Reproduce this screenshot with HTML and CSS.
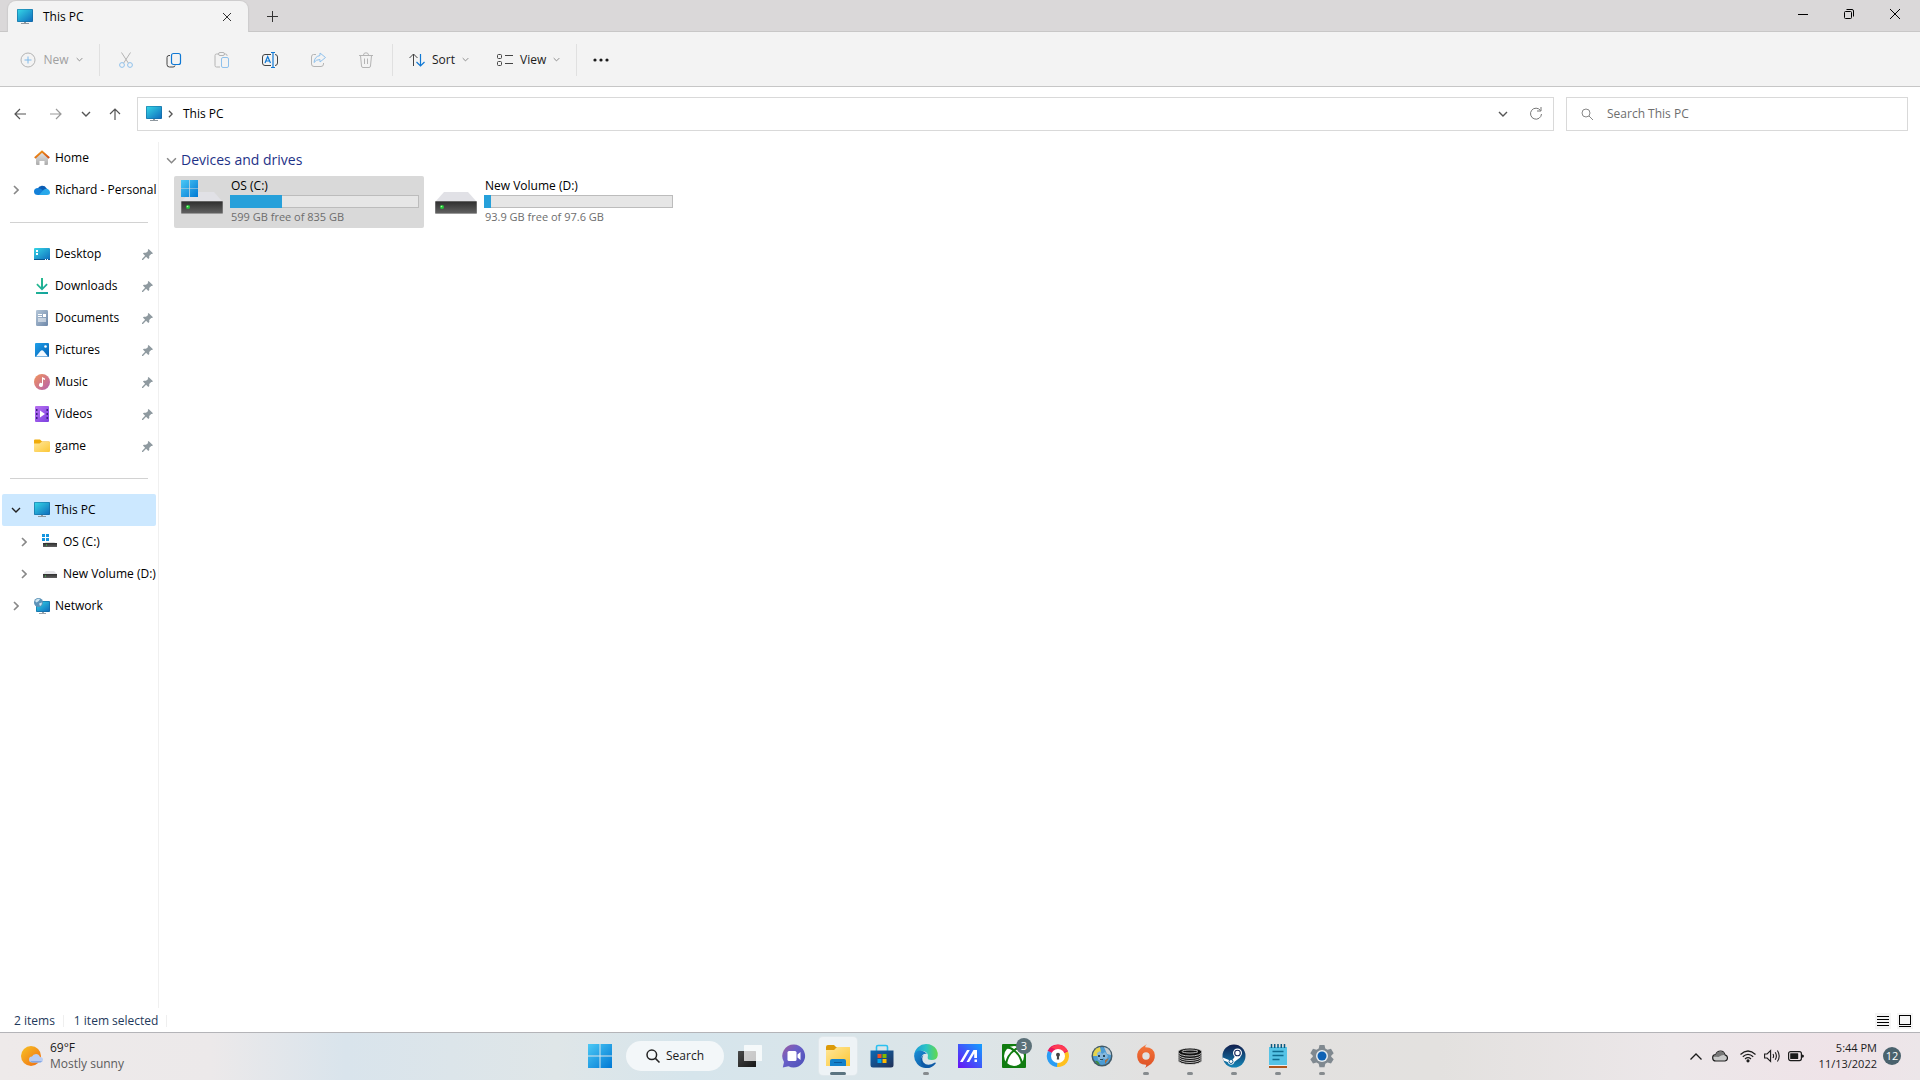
FILE: index.html
```html
<!DOCTYPE html>
<html lang="en">
<head>
<meta charset="utf-8">
<title>This PC</title>
<link rel="stylesheet" href="styles.css">
</head>
<body>
<svg class="defs" aria-hidden="true">
  <defs>
    <linearGradient id="g-screen" x1="0" y1="0" x2="1" y2="1"><stop offset="0" stop-color="#35d6e6"/><stop offset="1" stop-color="#0f6cbd"/></linearGradient>
    <linearGradient id="g-body" x1="0" y1="0" x2="0" y2="1"><stop offset="0" stop-color="#2e2e2e"/><stop offset="1" stop-color="#606060"/></linearGradient>
    <linearGradient id="g-win" x1="0" y1="0" x2="1" y2="1"><stop offset="0" stop-color="#4cc9f5"/><stop offset="1" stop-color="#0078d4"/></linearGradient>
    <linearGradient id="g-folder" x1="0" y1="0" x2="1" y2="1"><stop offset="0" stop-color="#ffe79a"/><stop offset="1" stop-color="#fcc736"/></linearGradient>
    <linearGradient id="g-green" x1="0" y1="0" x2="1" y2="1"><stop offset="0" stop-color="#2fc28a"/><stop offset="1" stop-color="#10a0a0"/></linearGradient>
    <linearGradient id="g-doc" x1="0" y1="0" x2="1" y2="1"><stop offset="0" stop-color="#b4c6d8"/><stop offset="1" stop-color="#6d87a8"/></linearGradient>
    <linearGradient id="g-pic" x1="0" y1="0" x2="1" y2="1"><stop offset="0" stop-color="#1ea0ea"/><stop offset="1" stop-color="#0560b4"/></linearGradient>
    <linearGradient id="g-music" x1="0" y1="0" x2="1" y2="1"><stop offset="0" stop-color="#f2945a"/><stop offset="1" stop-color="#b45fb0"/></linearGradient>
    <linearGradient id="g-video" x1="0" y1="0" x2="1" y2="1"><stop offset="0" stop-color="#b871f0"/><stop offset="1" stop-color="#7b3fe0"/></linearGradient>
    <linearGradient id="g-house" x1="0" y1="0" x2="0" y2="1"><stop offset="0" stop-color="#e6e6e6"/><stop offset="1" stop-color="#ababab"/></linearGradient>
    <linearGradient id="g-roof" x1="0" y1="0" x2="1" y2="1"><stop offset="0" stop-color="#f5a01c"/><stop offset="1" stop-color="#cf4a12"/></linearGradient>
    <linearGradient id="g-sun" x1="0" y1="0" x2="1" y2="1"><stop offset="0" stop-color="#f7c326"/><stop offset="1" stop-color="#f06a10"/></linearGradient>
    <linearGradient id="g-chat" x1="0" y1="0" x2="1" y2="1"><stop offset="0" stop-color="#a05a9e"/><stop offset="0.4" stop-color="#6a60c8"/><stop offset="1" stop-color="#4a50b8"/></linearGradient>
    <linearGradient id="g-store" x1="0" y1="0" x2="1" y2="1"><stop offset="0" stop-color="#0c6ab6"/><stop offset="1" stop-color="#223056"/></linearGradient>
    <linearGradient id="g-edge" x1="0" y1="0" x2="1" y2="0"><stop offset="0" stop-color="#1c9ad8"/><stop offset="0.5" stop-color="#2bc3c6"/><stop offset="1" stop-color="#63d94a"/></linearGradient>
    <linearGradient id="g-edge-low" x1="0" y1="0" x2="1" y2="1"><stop offset="0" stop-color="#1a8fd8"/><stop offset="1" stop-color="#0c4a94"/></linearGradient>
    <linearGradient id="g-asus" x1="0" y1="1" x2="1" y2="0"><stop offset="0" stop-color="#6a10f5"/><stop offset="1" stop-color="#12a0ff"/></linearGradient>
    <linearGradient id="g-steam" x1="0" y1="0" x2="0" y2="1"><stop offset="0" stop-color="#111d4c"/><stop offset="1" stop-color="#1486b8"/></linearGradient>
    <linearGradient id="g-origin" x1="0" y1="0" x2="0" y2="1"><stop offset="0" stop-color="#f5783c"/><stop offset="1" stop-color="#dd4f24"/></linearGradient>
    <linearGradient id="g-view" x1="0" y1="0" x2="1" y2="1"><stop offset="0" stop-color="#4a4a4a"/><stop offset="1" stop-color="#161616"/></linearGradient>
    <symbol id="pc" viewBox="0 0 16 16"><path d="M7 12h2v2h3v1H4v-1h3z" fill="#8f989f"/><rect width="16" height="13" rx="1" fill="#14689e"/><rect x="0.6" y="0.6" width="14.8" height="11.8" rx="0.5" fill="url(#g-screen)"/></symbol>
    <symbol id="chev-down" viewBox="0 0 10 6"><path d="M1 1l4 4 4-4" fill="none" stroke="currentColor" stroke-width="1.4"/></symbol>
    <symbol id="chev-right" viewBox="0 0 6 10"><path d="M1 1l4 4-4 4" fill="none" stroke="currentColor" stroke-width="1.6"/></symbol>
    <symbol id="pin" viewBox="0 0 12 12"><path d="M6.6 1L11 5.2l-1 .9-.8-.1-2 2.100.1 2-1 .9-2.200-2.300L1 12H0v-1l3.100-3.200L.9 5.600l1-.9 2.100.1L6.200 2.900 5.700 1.900z" fill="#8f9aa0"/></symbol>
    <symbol id="drive" viewBox="0 0 42 22"><path d="M9 0h24l8 9H1z" fill="#e1e1e6"/><rect y="9" width="42" height="13" rx="1" fill="#999"/><rect x="0.5" y="9.500" width="41" height="11.500" fill="url(#g-body)"/><circle cx="7" cy="15" r="2" fill="#24c838"/><circle cx="6.500" cy="14.500" r="0.8" fill="#a6ffa0"/></symbol>
    <symbol id="win" viewBox="0 0 24 24"><path d="M0 0h11.500v11.500H0zM12.500 0H24v11.500H12.500zM0 12.500h11.500V24H0zM12.500 12.500H24V24H12.500z" fill="url(#g-win)"/></symbol>
  </defs>
</svg>

<div class="window">
  <header class="tabs">
    <div class="tab">
      <svg class="i16"><use href="#pc"/></svg>
      <span class="tab-title">This PC</span>
      <button class="tab-close" aria-label="Close tab"><svg width="10" height="10" viewBox="0 0 10 10"><path d="M1 1l8 8M9 1L1 9" stroke="#333"/></svg></button>
    </div>
    <button class="tab-new" aria-label="New tab"><svg width="11" height="11" viewBox="0 0 11 11"><path d="M5.500 0v11M0 5.500h11" stroke="#333"/></svg></button>
    <div class="caption">
      <button aria-label="Minimize"><svg width="10" height="10" viewBox="0 0 10 10"><path d="M0 5.500h10" stroke="#000"/></svg></button>
      <button aria-label="Restore"><svg width="10" height="10" viewBox="0 0 10 10" fill="none" stroke="#000"><rect x="0.5" y="2.500" width="7" height="7" rx="1"/><path d="M2.500.5H8Q9.500.5 9.500 2v5.500"/></svg></button>
      <button aria-label="Close"><svg width="10" height="10" viewBox="0 0 10 10"><path d="M0 0l10 10M10 0L0 10" stroke="#000"/></svg></button>
    </div>
  </header>

  <div class="toolbar">
    <button class="cmd new" disabled>
      <svg class="i16" viewBox="0 0 16 16" fill="none"><circle cx="8" cy="8" r="7" stroke="#b4b4b4"/><path d="M8 4.500v7M4.500 8h7" stroke="#7fb9ea"/></svg>
      New <svg class="drop"><use href="#chev-down"/></svg>
    </button>
    <div class="tools">
      <button class="tool" aria-label="Cut" disabled><svg class="i16" viewBox="0 0 16 16" fill="none"><path d="M3.500 0.5l6.800 10.500M12.500.5L5.700 11" stroke="#b4b4b4"/><circle cx="4" cy="13" r="2.400" stroke="#8fc1ec"/><circle cx="12" cy="13" r="2.400" stroke="#8fc1ec"/></svg></button>
      <button class="tool" aria-label="Copy"><svg class="i16" viewBox="0 0 16 16" fill="none"><path d="M4 3.500H3Q1 3.500 1 5.500v7Q1 15 3.500 15H7q2 0 2-1.500" stroke="#444"/><rect x="5.500" y="1.500" width="9" height="11" rx="2" stroke="#0f78d4" stroke-width="1.200"/></svg></button>
      <button class="tool" aria-label="Paste" disabled><svg class="i16" viewBox="0 0 16 16" fill="none"><path d="M4.500 2H2.500q-1.500 0-1.500 1.500v10Q1 15 2.500 15H6M10.500 2h1Q13 2 13 3.500V4" stroke="#b4b4b4"/><rect x="4.500" y="0.5" width="6" height="3" rx="1.500" stroke="#b4b4b4"/><rect x="7.500" y="5.500" width="7" height="10" rx="1.500" stroke="#8fc1ec"/></svg></button>
      <button class="tool" aria-label="Rename"><svg class="i16" viewBox="0 0 16 16" fill="none"><path d="M9 2.500H3Q.5 2.500.5 5v6q0 2.500 2.500 2.500h6M13 2.500q2.500 0 2.500 2.500v6q0 2.500-2.500 2.500" stroke="#444"/><path d="M3 11l2.700-6.500L8.500 11M4 9h3.500M9 .5h4M9 15.500h4M11 .5v15" stroke="#0f78d4" stroke-width="1.200"/></svg></button>
      <button class="tool" aria-label="Share" disabled><svg class="i16" viewBox="0 0 16 16" fill="none"><path d="M6 2.500H3.500Q1.500 2.500 1.500 5v7q0 2.500 2.500 2.500h7q2.500 0 2.500-2.500v-1" stroke="#b4b4b4"/><path d="M10 1L15.500 5.500 10 10V7.500Q6 7.500 4 10.500q.5-6 6-7z" stroke="#8fc1ec" stroke-linejoin="round"/></svg></button>
      <button class="tool" aria-label="Delete" disabled><svg class="i16" viewBox="0 0 16 16" fill="none" stroke="#b4b4b4"><path d="M1 3.500h14M5.500 3Q5.500.8 8 .8T10.500 3M2.500 3.500l1 10.500q.1 1.500 1.500 1.500h6q1.400 0 1.500-1.500l1-10.500M6.500 6.500v5.500M9.500 6.500v5.500"/></svg></button>
    </div>
    <div class="group">
      <button class="cmd">
        <svg class="i16" viewBox="0 0 16 16" fill="none"><path d="M4.500 14V2M.5 6l4-4 4 4" stroke="#444"/><path d="M11.500 2v12M7.500 10l4 4 4-4" stroke="#0f78d4" stroke-width="1.200"/></svg>
        Sort <svg class="drop"><use href="#chev-down"/></svg>
      </button>
      <button class="cmd">
        <svg class="i16" viewBox="0 0 16 16" fill="none" stroke="#444"><rect x="0.500" y="2.500" width="4" height="4" rx="1"/><rect x="0.500" y="9.500" width="4" height="4" rx="1"/><path d="M8 3.500h8M8 11.500h8"/></svg>
        View <svg class="drop"><use href="#chev-down"/></svg>
      </button>
    </div>
    <button class="more" aria-label="See more"><svg class="i16" viewBox="0 0 16 16" fill="#1b1b1b"><circle cx="2" cy="8" r="1.600"/><circle cx="8" cy="8" r="1.600"/><circle cx="14" cy="8" r="1.600"/></svg></button>
  </div>

  <div class="location">
    <div class="history">
      <button aria-label="Back"><svg width="12" height="12" viewBox="0 0 12 12" fill="none" stroke="#555" stroke-width="1.200"><path d="M12 6H1M6 1L1 6l5 5"/></svg></button>
      <button aria-label="Forward"><svg width="12" height="12" viewBox="0 0 12 12" fill="none" stroke="#999" stroke-width="1.200"><path d="M0 6h11M6 1l5 5-5 5"/></svg></button>
      <button class="recent" aria-label="Recent locations"><svg class="chev"><use href="#chev-down"/></svg></button>
      <button class="up" aria-label="Up"><svg width="12" height="12" viewBox="0 0 12 12" fill="none" stroke="#555" stroke-width="1.200"><path d="M6 12V1M1 6l5-5 5 5"/></svg></button>
    </div>
    <div class="address">
      <svg class="i16"><use href="#pc"/></svg>
      <svg class="crumb"><use href="#chev-right"/></svg>
      <span class="path">This PC</span>
      <button aria-label="Previous locations"><svg class="chev"><use href="#chev-down"/></svg></button>
      <button aria-label="Refresh"><svg width="14" height="14" viewBox="0 0 14 14" fill="none" stroke="#777"><path d="M11.500 3.500A5.500 5.500 0 1 0 12.500 7M12 0v4H8"/></svg></button>
    </div>
    <label class="search">
      <svg width="12" height="12" viewBox="0 0 12 12" fill="none" stroke="#888"><circle cx="5" cy="5" r="4"/><path d="M8 8l4 4"/></svg>
      <input type="search" placeholder="Search This PC" aria-label="Search This PC">
    </label>
  </div>

  <div class="content">
    <nav class="side">
      <a href="#home"><span></span><svg class="i16" viewBox="0 0 16 16"><path d="M2 7.500L8 2l6 5.500V14q0 1-1 1h-2.500v-4h-5v4H3q-1 0-1-1z" fill="url(#g-house)"/><path d="M.8 8L8 1.500 15.200 8" fill="none" stroke="url(#g-roof)" stroke-width="2"/></svg>Home</a>
      <a href="#onedrive"><svg class="exp"><use href="#chev-right"/></svg><svg class="i16" viewBox="0 0 16 16"><path d="M3.500 7A5 4.800 0 0 1 12.500 6.200L14 9H3z" fill="#0a5cb4"/><path d="M0 9.500Q0 6 4 6q3 0 5 2.500L12 13H4Q0 13 0 9.500z" fill="#1480d8"/><path d="M5 13l4.500-5q3-2.500 5.500 0 1 1 1 2.500 0 2.500-3 2.500z" fill="#28a8ea"/></svg>Richard - Personal</a>
      <hr>
      <a href="#desktop"><span></span><svg class="i16" viewBox="0 0 16 16"><rect y="2" width="16" height="12" rx="1" fill="url(#g-screen)"/><path d="M2 4h2v2H2zM2 7h2v2H2z" fill="#fff"/><path d="M0 13h16v1H0z" fill="#075590"/><path d="M11 13h1v1h-1zM13 13h1v1h-1z" fill="#fff"/></svg>Desktop<svg class="pin"><use href="#pin"/></svg></a>
      <a href="#downloads"><span></span><svg class="i16" viewBox="0 0 16 16"><path d="M7 0h2v9l3.500-3.500 1.200 1.300L8 12.500 2.300 6.800l1.200-1.300L7 9zM2 14h12v2H2z" fill="url(#g-green)"/></svg>Downloads<svg class="pin"><use href="#pin"/></svg></a>
      <a href="#documents"><span></span><svg class="i16" viewBox="0 0 16 16"><rect x="2" width="12" height="16" rx="1.200" fill="url(#g-doc)"/><path d="M4 4h4v1H4zM4 6h4v1H4zM9 4h3v3H9zM4 8.500h8v1H4zM4 10.500h8v1H4z" fill="#fff"/></svg>Documents<svg class="pin"><use href="#pin"/></svg></a>
      <a href="#pictures"><span></span><svg class="i16" viewBox="0 0 16 16"><rect x="1" y="1" width="14" height="14" rx="1" fill="url(#g-pic)"/><path d="M2 14.500L6.500 9q1.500-1.500 3 0l4.500 5.500z" fill="#f4faff"/><circle cx="11.500" cy="4.500" r="1.300" fill="#fff"/></svg>Pictures<svg class="pin"><use href="#pin"/></svg></a>
      <a href="#music"><span></span><svg class="i16" viewBox="0 0 16 16"><circle cx="8" cy="8" r="8" fill="url(#g-music)"/><path d="M8 3l3 1.500V6L9 5.200V11a2 2 0 1 1-1-1.800z" fill="#fff"/></svg>Music<svg class="pin"><use href="#pin"/></svg></a>
      <a href="#videos"><span></span><svg class="i16" viewBox="0 0 16 16"><rect x="1" width="14" height="16" rx="1" fill="url(#g-video)"/><path d="M2 3h1.500v2H2zM2 7h1.500v2H2zM2 11h1.500v2H2zM12.500 3H14v2h-1.500zM12.500 7H14v2h-1.500zM12.500 11H14v2h-1.500z" fill="#3a1f80"/><path d="M6 4.500l5 3.500-5 3.500z" fill="#fff"/></svg>Videos<svg class="pin"><use href="#pin"/></svg></a>
      <a href="#game"><span></span><svg class="i16" viewBox="0 0 16 16"><path d="M0 2.500Q0 1.500 1 1.500h5L8 3.500h7q1 0 1 1V7H0z" fill="#f0ac0a"/><path d="M0 5.500h5.500L7.500 4H15.500q.5 0 .5.500V13q0 1-1 1H1q-1 0-1-1z" fill="url(#g-folder)"/></svg>game<svg class="pin"><use href="#pin"/></svg></a>
      <hr>
      <a href="#this-pc" class="current" aria-current="page"><svg class="exp open"><use href="#chev-down"/></svg><svg class="i16"><use href="#pc"/></svg>This PC</a>
      <a href="#c" class="child"><svg class="exp"><use href="#chev-right"/></svg><svg class="i16" viewBox="0 0 16 16"><path d="M4 8h8l3 2H1z" fill="#ddd"/><rect x="1" y="9" width="14" height="4" fill="url(#g-body)"/><path d="M4 10.500h1v1H4z" fill="#3be04a"/><path d="M0 0h7v7.500H0z" fill="#fff"/><path d="M0 0h3v3H0zM4 0h3v3H4zM0 4h3v3H0zM4 4h3v3H4z" fill="#1495e0"/></svg>OS (C:)</a>
      <a href="#d" class="child"><svg class="exp"><use href="#chev-right"/></svg><svg class="i16" viewBox="0 0 16 16"><path d="M4 5h8l3 3H1z" fill="#e4e4e8"/><rect x="1" y="8" width="14" height="4" fill="url(#g-body)"/><path d="M3 9.500h1v1H3z" fill="#3be04a"/></svg>New Volume (D:)</a>
      <a href="#network"><svg class="exp"><use href="#chev-right"/></svg><svg class="i16" viewBox="0 0 16 16"><path d="M8 13h2v2h2v1H5v-1h3z" fill="#9aa3ab"/><rect x="2" y="3" width="14" height="11" rx="1" fill="#14689e"/><rect x="2.600" y="3.600" width="12.800" height="9.800" fill="url(#g-screen)"/><circle cx="4.500" cy="4.500" r="4.500" fill="#5d93b8"/><path d="M1 3q2-3 5-2Q5 4 2.500 4.500zM5 5.500l3-1q0 2.500-2 3.500z" fill="#cfe6f2"/></svg>Network</a>
    </nav>
    <main class="files">
      <h1><svg class="fold"><use href="#chev-down"/></svg>Devices and drives</h1>
      <div class="drives">
        <a href="#c" class="drive selected">
          <svg class="drive-icon" viewBox="0 0 42 42"><use href="#drive" y="12" width="42" height="22"/><use href="#win" width="17" height="17"/></svg>
          <span class="info"><span class="name">OS (C:)</span><span class="bar"><span class="fill" style="width: 28%"></span></span><span class="free">599 GB free of 835 GB</span></span>
        </a>
        <a href="#d" class="drive">
          <svg class="drive-icon" viewBox="0 0 42 42"><use href="#drive" y="12" width="42" height="22"/></svg>
          <span class="info"><span class="name">New Volume (D:)</span><span class="bar"><span class="fill" style="width: 4%"></span></span><span class="free">93.9 GB free of 97.6 GB</span></span>
        </a>
      </div>
    </main>
  </div>

  <footer class="status">
    <span>2 items</span><span>1 item selected</span>
    <div class="modes">
      <button aria-label="Details view"><svg width="12" height="12" viewBox="0 0 12 12" stroke="#000"><path d="M0 1.500h12M0 4.500h12M0 7.500h12M0 10.500h12"/></svg></button>
      <button aria-label="Large icons view"><svg width="12" height="12" viewBox="0 0 12 12" fill="none" stroke="#000"><rect x="0.500" y="0.500" width="11" height="9"/><path d="M0 11.500h12"/></svg></button>
    </div>
  </footer>
</div>

<div class="taskbar">
  <button class="weather">
    <svg width="22" height="20" viewBox="0 0 22 20"><circle cx="10" cy="10" r="10" fill="url(#g-sun)"/><path d="M11 16.500a3 3 0 0 1 0-6q1-2.500 4-2.500t4 3q3 .3 3 2.700T19.500 16.500z" fill="#b9cdf3"/><path d="M9 15h12q-1 1.500-2 1.500h-8z" fill="#86a8e4"/></svg>
    <span class="weather-text"><span>69°F</span><span class="muted">Mostly sunny</span></span>
  </button>
  <div class="apps">
    <button class="app" aria-label="Start"><svg class="i24" viewBox="0 0 24 24"><use href="#win"/></svg></button>
    <button class="find"><svg width="14" height="14" viewBox="0 0 14 14" fill="none" stroke="#222" stroke-width="1.500"><circle cx="5.800" cy="5.800" r="4.800"/><path d="M9.400 9.400L13.500 13.500"/></svg>Search</button>
    <button class="app" aria-label="Task view"><svg class="i24" viewBox="0 0 24 24"><rect y="7" width="18" height="16" rx="0.500" fill="url(#g-view)"/><rect x="6" y="1" width="18" height="16" rx="0.500" fill="#fff" fill-opacity="0.750"/></svg></button>
    <button class="app" aria-label="Chat"><svg class="i24" viewBox="0 0 24 24"><path d="M12 .5A11.500 11.500 0 1 1 6.500 22.300L.8 23.500 2 18A11.500 11.500 0 0 1 12 .5z" fill="url(#g-chat)"/><rect x="5.500" y="7" width="9" height="10" rx="1.500" fill="#fff"/><path d="M15.500 10.500l3-2.500v8l-3-2.500z" fill="#fff"/></svg></button>
    <button class="app active" aria-label="File Explorer"><svg class="i24" viewBox="0 0 24 24"><path d="M0 3q0-2 2-2h6l2 2h12q2 0 2 2v5H0z" fill="#dc9a08"/><path d="M0 6h8l3-3h12q1 0 1 1v18H0z" fill="url(#g-folder)"/><path d="M4 22v-5q0-2 2-2h12q2 0 2 2v5z" fill="#1382cc"/><path d="M8 18.500h8" stroke="#0a5a9c"/></svg></button>
    <button class="app" aria-label="Microsoft Store"><svg class="i24" viewBox="0 0 24 24"><path d="M6.500 7V3q0-1.500 1.500-1.500h8q1.500 0 1.500 1.500v4" fill="none" stroke="#2bc0f0" stroke-width="1.600"/><path d="M.5 6.500h23V21q0 2.500-2.500 2.500H3Q.5 23.500.5 21z" fill="url(#g-store)"/><path d="M7.500 10h4v4h-4z" fill="#f25022"/><path d="M12.500 10h4v4h-4z" fill="#7fba00"/><path d="M7.500 15h4v4h-4z" fill="#00a4ef"/><path d="M12.500 15h4v4h-4z" fill="#ffb900"/></svg></button>
    <button class="app running" aria-label="Edge"><svg class="i24" viewBox="0 0 24 24"><path d="M.2 11A12 12 0 0 1 12 0q7 0 10.500 5.500Q24 8.500 23.700 11.500q-.7 4.500-6 4.500-4.500 0-4-2.500 1-2.500-.7-4.500Q10 6 5.500 7 1.500 8 .2 11z" fill="url(#g-edge)"/><path d="M.2 11Q1.500 6 7 6.500q4 .5 6 3.500-4-1-5.500 3-1 5 4 8.500Q16 24 20 19.500 17 24 12 24A12 12 0 0 1 .2 11z" fill="url(#g-edge-low)"/><path d="M9.500 11q-2.500 3.500 0 7.500 4 4.500 11.500 0 1 0 .7 1Q17 25 11.500 23.800 6 21 7 14.500 7.500 12 9.500 11z" fill="#0e5aa6"/></svg></button>
    <button class="app" aria-label="MyASUS"><svg class="i24" viewBox="0 0 24 24"><path d="M0 0h24v24H0z" fill="url(#g-asus)"/><path d="M2 18l7-12h2.800l-7 12zM8.500 18l7-12H19v8h-2.800V9.500l-5 8.500zM16.500 15.500H19V18h-2.500z" fill="#fff"/></svg></button>
    <button class="app" aria-label="Xbox, 3 notifications"><svg class="i24" viewBox="0 0 24 24"><rect width="24" height="24" rx="1" fill="#107c10"/><circle cx="12" cy="12" r="10" fill="#fff"/><path d="M5 3.500Q8 2.800 12 6q4-3.200 7-2.500Q12-1 5 3.500zM12 9.500q6 5 6.500 10.500-6.500 4.500-13 0Q6 14.500 12 9.500z" fill="#107c10" fill-opacity="0"/><path d="M12 6.500Q5.500 11 4 20M12 6.500Q18.500 11 20 20M5 3.500q4 0 7 3 3-3 7-3" stroke="#107c10" stroke-width="2" fill="none"/></svg><span class="badge">3</span></button>
    <button class="app" aria-label="Secure Browser"><svg class="i24" viewBox="0 0 24 24"><path d="M12 12L1.500 7A11 11 0 0 1 22 8z" fill="#e8175c"/><path d="M12 12L22 7.500A11 11 0 0 1 11 23z" fill="#ffc01e"/><path d="M12 12l-1 11A11 11 0 0 1 2 7z" fill="#2a9df4"/><path d="M5 3.500A11 11 0 0 1 22 7l-5 1z" fill="#ff3b53"/><circle cx="12" cy="12" r="7" fill="#fff"/><circle cx="12" cy="10.800" r="2" fill="#444"/><path d="M11.200 11h1.600l.4 4.500h-2.400z" fill="#444"/></svg></button>
    <button class="app" aria-label="Globe"><svg class="i24" viewBox="0 0 24 24"><circle cx="12" cy="12" r="10.500" fill="#415a68"/><circle cx="12" cy="12" r="9" fill="#4c9cd4"/><path d="M3 12q0-7 7-9l1 5-3 4z" fill="#e6d34c"/><path d="M14 3q7 2 7 8l-4-1z" fill="#c4ccd0"/><path d="M7 9l3-2 2 3 3-2 3 4-2 4-3-2-2 3-3-1z" fill="#86b8dc"/><path d="M8 11h2v2H8zM13 11h2v2h-2zM10 15h3v1h-3z" fill="#294759"/><path d="M5 17q3-1 5 4-3-.5-5-4z" fill="#3f8a3c"/><path d="M15 16l4-2-4 6z" fill="#ad6d3a"/></svg></button>
    <button class="app running" aria-label="Origin"><svg class="i24" viewBox="0 0 24 24"><path fill-rule="evenodd" d="M13 0q-2 1.500-1.800 3.200Q20 3 20.800 11 21.500 18 14 22l-3 2q1.500-2 1.200-3.200Q4 21 3.200 13 2.500 6 10 2zM12 8.300a3.700 3.700 0 1 0 0 7.400 3.700 3.700 0 0 0 0-7.400z" fill="url(#g-origin)"/></svg></button>
    <button class="app running" aria-label="Disk stack"><svg class="i24" viewBox="0 0 24 24" fill="#111" stroke="#e4e4e4" stroke-width="0.800"><ellipse cx="12" cy="16" rx="12" ry="4.500"/><ellipse cx="12" cy="14" rx="12" ry="4.500"/><ellipse cx="12" cy="12" rx="12" ry="4.500"/><ellipse cx="12" cy="10" rx="12" ry="4.500"/><ellipse cx="12" cy="8" rx="12" ry="4"/><ellipse cx="12" cy="7.500" rx="8" ry="1.500"/></svg></button>
    <button class="app running" aria-label="Steam"><svg class="i24" viewBox="0 0 24 24"><circle cx="12" cy="12" r="11.500" fill="url(#g-steam)"/><path d="M.8 13.500l6.700 2.800 3-.6 3-4 5 1.500-6 4.500q-.8 3-3.500 3-2.500 0-3.400-2.700l-4-1.500z" fill="#fff"/><circle cx="15.500" cy="9" r="4.500" fill="#fff"/><circle cx="15.500" cy="9" r="2.800" fill="none" stroke="#17285c" stroke-width="1.100"/><circle cx="9" cy="17.500" r="2" fill="none" stroke="#155e90"/></svg></button>
    <button class="app running" aria-label="Notepad"><svg class="i24" viewBox="0 0 24 24"><path d="M3 3h18v18H3z" fill="#56c3e6"/><path d="M3 21h18v1H3z" fill="#eee"/><path d="M3 22h18v2H3z" fill="#b0561c"/><path d="M5.500 0v4M8.700 0v4M12 0v4M15.300 0v4M18.500 0v4" stroke="#0c5a80" stroke-width="1.500"/><path d="M6.500 7.500h11M6.500 11.500h11M6.500 15.500h7" stroke="#0f6b90" stroke-width="1.500"/></svg></button>
    <button class="app running" aria-label="Settings"><svg class="i24" viewBox="0 0 24 24"><path d="M9.500 1h5l.8 3.500 2.200 1.200L21 4.700l2.700 4.500-2.500 2.500v1l2.500 2.500L21 19.500l-3.500-1-2.200 1.200-.8 3.500h-5l-.8-3.500-2.200-1.200-3.500 1L.3 15.200l2.500-2.500v-1L.3 9.200 3 4.700l3.500 1 2.200-1.200z" fill="#808990"/><circle cx="12" cy="12" r="6" fill="#e8edf0"/><circle cx="12" cy="12" r="4.500" fill="#0f62b4"/></svg></button>
  </div>
  <div class="tray">
    <button aria-label="Show hidden icons"><svg width="12" height="7" viewBox="0 0 12 7"><path d="M0.500 6.500L6 1l5.500 5.500" fill="none" stroke="#1b1b1b" stroke-width="1.300"/></svg></button>
    <button aria-label="OneDrive"><svg class="i16" viewBox="0 0 16 16"><path d="M4 13a3.200 3.200 0 0 1-.3-6.400Q5 3 8.500 3t4.500 3.800Q15.500 7.500 15.500 10T13 13z" fill="#c8c8c8" stroke="#222" stroke-width="1.200"/><path d="M4 6.600Q5 3.600 8.500 3.600t4 3.200Q9 7 6.500 9 4 8.500 2 9 2 7 4 6.600z" fill="#777"/></svg></button>
    <button class="net" aria-label="Network, volume and battery">
      <svg class="i16" viewBox="0 0 16 16" fill="none" stroke="#1b1b1b" stroke-width="1.200"><path d="M.5 6.500q7.500-7 15 0M2.800 8.800q5.200-5 10.400 0M5 11q3-2.600 6 0"/><circle cx="8" cy="12.800" r="1" fill="#1b1b1b"/></svg>
      <svg class="i16" viewBox="0 0 16 16" fill="none" stroke="#1b1b1b" stroke-width="1.100"><path d="M.6 6h2.500l3.500-3.500v11L3.100 10H.6zM9 6q1.200 2 0 4M11.200 4.200q2.400 3.800 0 7.600M13.400 2.500q3.600 5.500 0 11"/></svg>
      <svg class="i16" viewBox="0 0 16 16"><rect x="0.600" y="3.600" width="12.800" height="9" rx="2" fill="none" stroke="#1b1b1b" stroke-width="1.200"/><rect x="2.200" y="5.200" width="8" height="5.800" rx="0.500" fill="#1b1b1b"/><path d="M14 6.500q2 0 2 1.600t-2 1.600z" fill="#1b1b1b"/></svg>
    </button>
    <button class="clock"><span>5:44 PM</span><span>11/13/2022</span></button>
    <button class="count" aria-label="12 notifications">12</button>
  </div>
</div>
</body>
</html>
```
FILE: styles.css
```css
* { box-sizing: border-box; }

body {
  margin: 0;
  min-height: 100vh;
  display: flex;
  flex-direction: column;
  background: #fff;
  color: #000;
  font: 12px/16px "Open Sans", "Noto Sans", sans-serif;
}

button {
  display: flex;
  align-items: center;
  justify-content: center;
  padding: 0;
  border: 0;
  background: none;
  color: inherit;
  font: inherit;
  white-space: nowrap;
}

a { color: inherit; text-decoration: none; }
svg { flex: none; display: block; }

.defs { position: absolute; width: 0; height: 0; }
.i16 { width: 16px; height: 16px; }
.i24 { width: 24px; height: 24px; }

.window {
  flex: 1;
  display: flex;
  flex-direction: column;
}

/* Tab strip */
.tabs {
  display: flex;
  height: 32px;
  padding-left: 8px;
  background: #dad8d9;
  box-shadow: inset 0 -1px #c8c7c7;
}
.tab {
  display: flex;
  align-items: center;
  gap: 10px;
  width: 240px;
  margin-top: 1px;
  padding: 0 16px 0 9px;
  border-radius: 8px 8px 0 0;
  background: #f3f3f3;
  box-shadow: 0 0 1px 1px #cdcccc;
  clip-path: inset(-2px -2px 0 -2px);
}
.tab-title { flex: 1; }
.tab-new { width: 48px; }
.caption { display: flex; margin-left: auto; padding: 0 2px 4px 0; }
.caption button { width: 46px; }

/* Command bar */
.toolbar {
  display: flex;
  align-items: center;
  height: 55px;
  padding-top: 1px;
  background: #f3f3f3;
  border-bottom: 1px solid #c6c6c6;
  color: #1b1b1b;
}
.toolbar button { height: 32px; }
.cmd { gap: 7px; }
.cmd.new { width: 99px; padding-left: 4px; color: #a0a0a0; }
.drop { width: 7px; height: 5px; color: #8a8a8a; }
.tools {
  display: flex;
  padding: 0 2px;
  border: 1px solid #e0e0e0;
  border-width: 0 1px;
}
.tool { width: 48px; }
.group {
  display: flex;
  gap: 28px;
  padding: 0 16px;
  border-right: 1px solid #e0e0e0;
}
.more { width: 48px; }

/* Navigation and address row */
.location {
  display: flex;
  height: 55px;
  padding: 10px 12px 10px 0;
}
.history { display: flex; width: 137px; padding-left: 2px; }
.history button { width: 36px; height: 34px; }
.history .recent { width: 24px; }
.history .up { width: 34px; }
.chev { width: 10px; height: 6px; color: #555; }
.address {
  flex: 1;
  display: flex;
  align-items: center;
  height: 34px;
  padding: 0 1px 0 8px;
  border: 1px solid #d9d9d9;
}
.address button { width: 33px; height: 32px; }
.crumb { width: 5px; height: 8px; margin: 0 10px 0 6px; color: #555; }
.path { flex: 1; }
.search {
  display: flex;
  align-items: center;
  gap: 14px;
  width: 342px;
  height: 34px;
  margin-left: 12px;
  padding: 0 14px;
  border: 1px solid #d9d9d9;
}
.search input {
  flex: 1;
  min-width: 0;
  padding: 0;
  border: 0;
  outline: 0;
  background: none;
  font: inherit;
}
.search input::placeholder { color: #6e6e6e; opacity: 1; }

/* Sidebar */
.content { flex: 1; display: flex; }
.side {
  width: 159px;
  padding-left: 2px;
  border-right: 1px solid #f0f0f0;
}
.side a {
  display: grid;
  grid-template-columns: 27px 16px 1fr auto;
  align-items: center;
  column-gap: 5px;
  width: 154px;
  height: 32px;
  padding-right: 2px;
  border-radius: 2px;
  white-space: nowrap;
}
.side a.child { padding-left: 8px; }
.side a.current { background: #cce8ff; }
.side hr {
  height: 1px;
  margin: 16px 10px 15px 8px;
  border: 0;
  background: #d2d2d2;
}
.exp { width: 6px; height: 10px; margin-left: 11px; color: #888; }
.exp.open { width: 10px; height: 6px; margin-left: 9px; color: #222; }
.pin { width: 12px; height: 12px; }

/* Drive list */
.files { flex: 1; padding: 7px 0 0 7px; }
.files h1 {
  display: flex;
  align-items: center;
  gap: 4px;
  height: 22px;
  margin: 0 0 5px;
  color: #1e3287;
  font-size: 14px;
  font-weight: 400;
}
.fold { width: 11px; height: 7px; color: #888; }
.drives { display: flex; gap: 4px; padding-left: 8px; }
.drive {
  display: flex;
  gap: 7px;
  width: 250px;
  height: 52px;
  padding: 2px 5px 2px 7px;
  border-radius: 2px;
}
.drive.selected { background: #d9d9d9; }
.drive-icon { width: 42px; height: 42px; margin-top: 2px; }
.info { flex: 1; display: flex; flex-direction: column; }
.name, .free { padding-left: 1px; }
.free { color: #6d6d6d; font-size: 11px; }
.bar {
  display: flex;
  height: 13px;
  margin: 1px 0;
  border: 1px solid #bcbcbc;
  background: #e6e6e6;
}
.fill { margin: -1px 0 -1px -1px; background: #26a0da; }

/* Status bar */
.status {
  display: flex;
  align-items: center;
  height: 24px;
  padding: 1px 7px 0 4px;
  color: #1e395b;
}
.status span { padding: 0 8px 0 10px; border-right: 1px solid #efefef; line-height: 12px; }
.modes { display: flex; gap: 6px; margin-left: auto; }
.modes button { width: 16px; height: 16px; background: #f5f5f5; }

/* Taskbar */
.taskbar {
  display: grid;
  grid-template-columns: 1fr auto 1fr;
  align-items: center;
  height: 48px;
  padding: 0 0 1px 2px;
  border-top: 1px solid #b4b4b8;
  background: linear-gradient(90deg, #eeeaea 0%, #ece9ea 11%, #d9e4ec 18%, #dfe6e8 29%, #d6e5ec 36%, #dce5e8 50%, #e2e1e0 60%, #e3e1df 75%, #ece7e9 87%, #efe3e8 96%, #ece6e9 100%);
  color: #1b1b1b;
}
.weather { justify-self: start; gap: 7px; margin-left: 19px; }
.weather-text { display: flex; flex-direction: column; text-align: left; }
.muted { color: #5c5c5c; }
.apps { display: flex; align-items: center; }
.app {
  position: relative;
  width: 38px;
  height: 38px;
  margin: 0 3px;
  border-radius: 4px;
}
.app.active { background: #eef3f6; box-shadow: 0 0 0 1px #e0e8ec; }
.running::after, .active::after {
  content: "";
  position: absolute;
  bottom: 0;
  left: 16px;
  width: 6px;
  height: 3px;
  border-radius: 2px;
  background: #868b8e;
}
.active::after { left: 11px; width: 16px; background: #5b7480; }
.badge {
  position: absolute;
  top: 1px;
  right: 1px;
  width: 16px;
  height: 16px;
  border-radius: 8px;
  background: #5b7078;
  color: #fff;
  font-size: 11px;
}
.find {
  gap: 6px;
  width: 98px;
  height: 30px;
  margin: 0 4px;
  border-radius: 15px;
  background: #f3f7f9;
}
.tray { display: flex; align-items: center; justify-self: end; padding-right: 19px; }
.tray button { height: 38px; }
.tray > button + button { margin-left: 10px; }
.tray .net { gap: 8px; margin-left: 12px; }
.tray .clock { flex-direction: column; align-items: flex-end; width: 63px; font-size: 11px; }
.tray .count {
  width: 18px;
  height: 18px;
  margin-left: 6px;
  border-radius: 9px;
  background: #4a626d;
  color: #fff;
  font-size: 11px;
}
```
